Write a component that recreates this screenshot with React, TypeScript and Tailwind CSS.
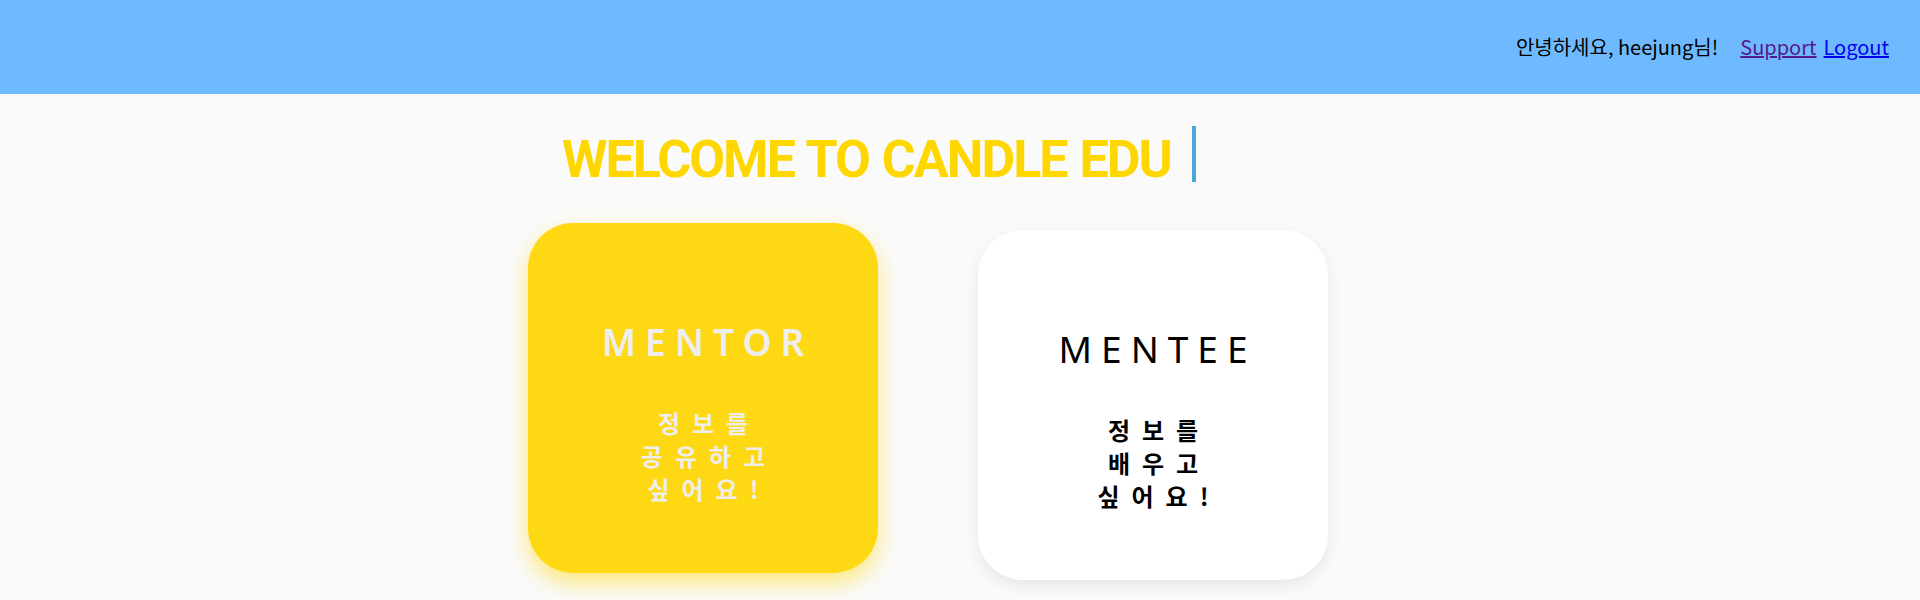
export default function App() {
  return (
    <div className="min-h-screen bg-[#fafafa] font-['Noto_Sans','Noto_Sans_CJK_KR',sans-serif]">
      <header className="h-[94px] bg-[#6fbaff] flex items-center justify-end pr-[31px] text-[20px] font-['Noto_Sans_CJK_KR',sans-serif]">
        <span className="text-black mr-[22px]">안녕하세요, heejung님!</span>
        <a href="#" className="text-[#551a8b] underline">Support</a>
        <a href="#" className="text-[#0000ee] underline ml-[7px]">Logout</a>
      </header>

      <main>
        <div className="flex items-start pl-[562px] pt-[32px]">
          <h1 className="mt-[11px] text-[52px] leading-[45px] font-bold tracking-[-2px] [word-spacing:2px] text-[#ffd700] font-['Roboto',sans-serif]">
            WELCOME TO CANDLE EDU
          </h1>
          <span className="ml-[21px] h-[56px] w-[4px] bg-[#4aa8dc]" />
        </div>

        <div className="flex items-start gap-[100px] pl-[528px] mt-[41px]">
          <div className="w-[350px] h-[350px] rounded-[45px] bg-[#ffd814] shadow-[0_10px_22px_rgba(255,216,20,0.55)] flex flex-col items-center pt-[97px] text-center text-[#eeeeee]">
            <p className="text-[37px] leading-[44px] font-semibold tracking-[9px] pl-[9px]">MENTOR</p>
            <p className="mt-[42px] w-[180px] break-keep text-[24px] leading-[33px] font-bold tracking-[12px] pl-[12px] font-['Noto_Sans_CJK_KR',sans-serif]">
              정보를 공유하고 싶어요!
            </p>
          </div>

          <div className="mt-[7px] w-[350px] h-[350px] rounded-[45px] bg-white shadow-[0_6px_16px_rgba(0,0,0,0.08)] flex flex-col items-center pt-[97px] text-center text-black">
            <p className="text-[37px] leading-[44px] font-normal tracking-[9px] pl-[9px]">MENTEE</p>
            <p className="mt-[42px] w-[180px] break-keep text-[24px] leading-[33px] font-bold tracking-[12px] pl-[12px] font-['Noto_Sans_CJK_KR',sans-serif]">
              정보를 배우고 싶어요!
            </p>
          </div>
        </div>
      </main>
    </div>
  );
}
